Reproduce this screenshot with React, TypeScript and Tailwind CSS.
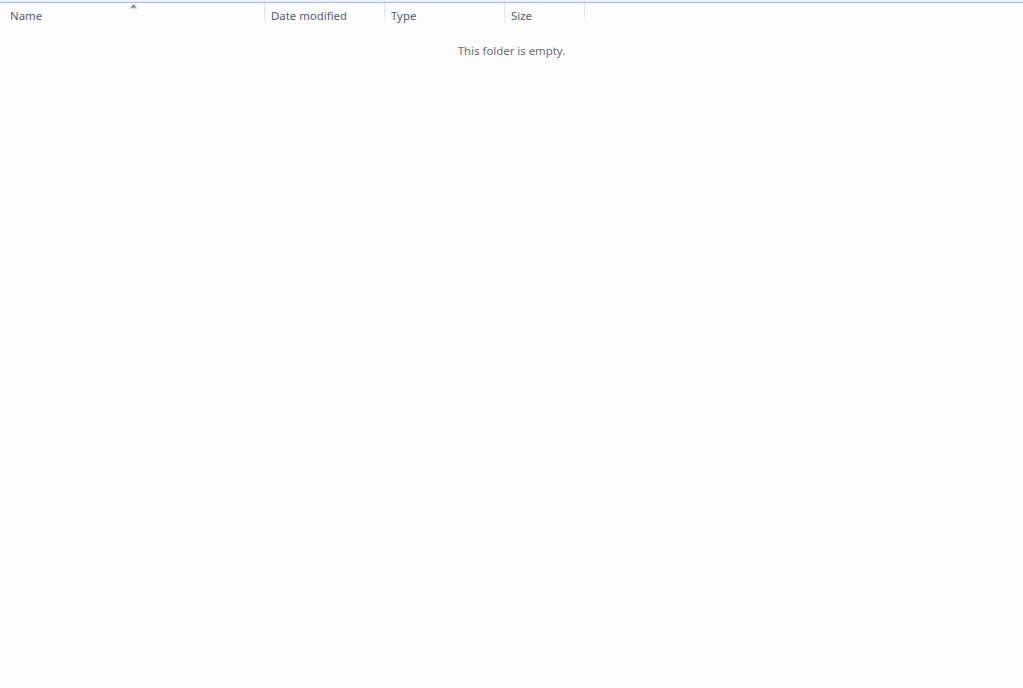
import React from 'react';

const columns = [
  { label: 'Name', width: 'w-[264px]', pad: 'pl-[10px]' },
  { label: 'Date modified', width: 'w-[120px]', pad: 'pl-[6px]' },
  { label: 'Type', width: 'w-[120px]', pad: 'pl-[6px]' },
  { label: 'Size', width: 'w-[80px]', pad: 'pl-[6px]' },
];

export default function App() {
  return (
    <div
      className="w-[1023px] h-[688px] bg-[#fcfcfc] overflow-hidden flex flex-col"
      style={{ fontFamily: '"Segoe UI", "Noto Sans", sans-serif' }}
    >
      <div className="h-[2px] bg-[#eef2f8]" />
      <div className="h-px bg-[#a9bcd6]" />
      <div className="flex h-[23px]">
        {columns.map((col, i) => (
          <div key={col.label} className={`${col.width} relative flex`}>
            {i > 0 && (
              <div className="w-px h-full bg-gradient-to-b from-[#dbe5f1] via-[#dbe5f1] to-transparent" />
            )}
            <div className={`flex-1 flex items-center pt-[3px] ${col.pad} text-[11.4px] text-[#4c607a]`}>
              {col.label}
            </div>
            {i === 0 && (
              <svg
                className="absolute left-[129px] top-[1px]"
                width="9"
                height="5"
                viewBox="0 0 9 5"
              >
                <defs>
                  <linearGradient id="arr" x1="0" y1="0" x2="0" y2="1">
                    <stop offset="0" stopColor="#3c5a7a" />
                    <stop offset="1" stopColor="#9ccae8" />
                  </linearGradient>
                </defs>
                <path d="M4.5 0.5 L8.5 4.5 L0.5 4.5 Z" fill="url(#arr)" />
              </svg>
            )}
          </div>
        ))}
        <div className="w-px h-full bg-gradient-to-b from-[#dbe5f1] via-[#dbe5f1] to-transparent" />
      </div>
      <div className="flex justify-center pt-[16px] text-[11.4px] text-[#6d6d6d]">
        This folder is empty.
      </div>
    </div>
  );
}
